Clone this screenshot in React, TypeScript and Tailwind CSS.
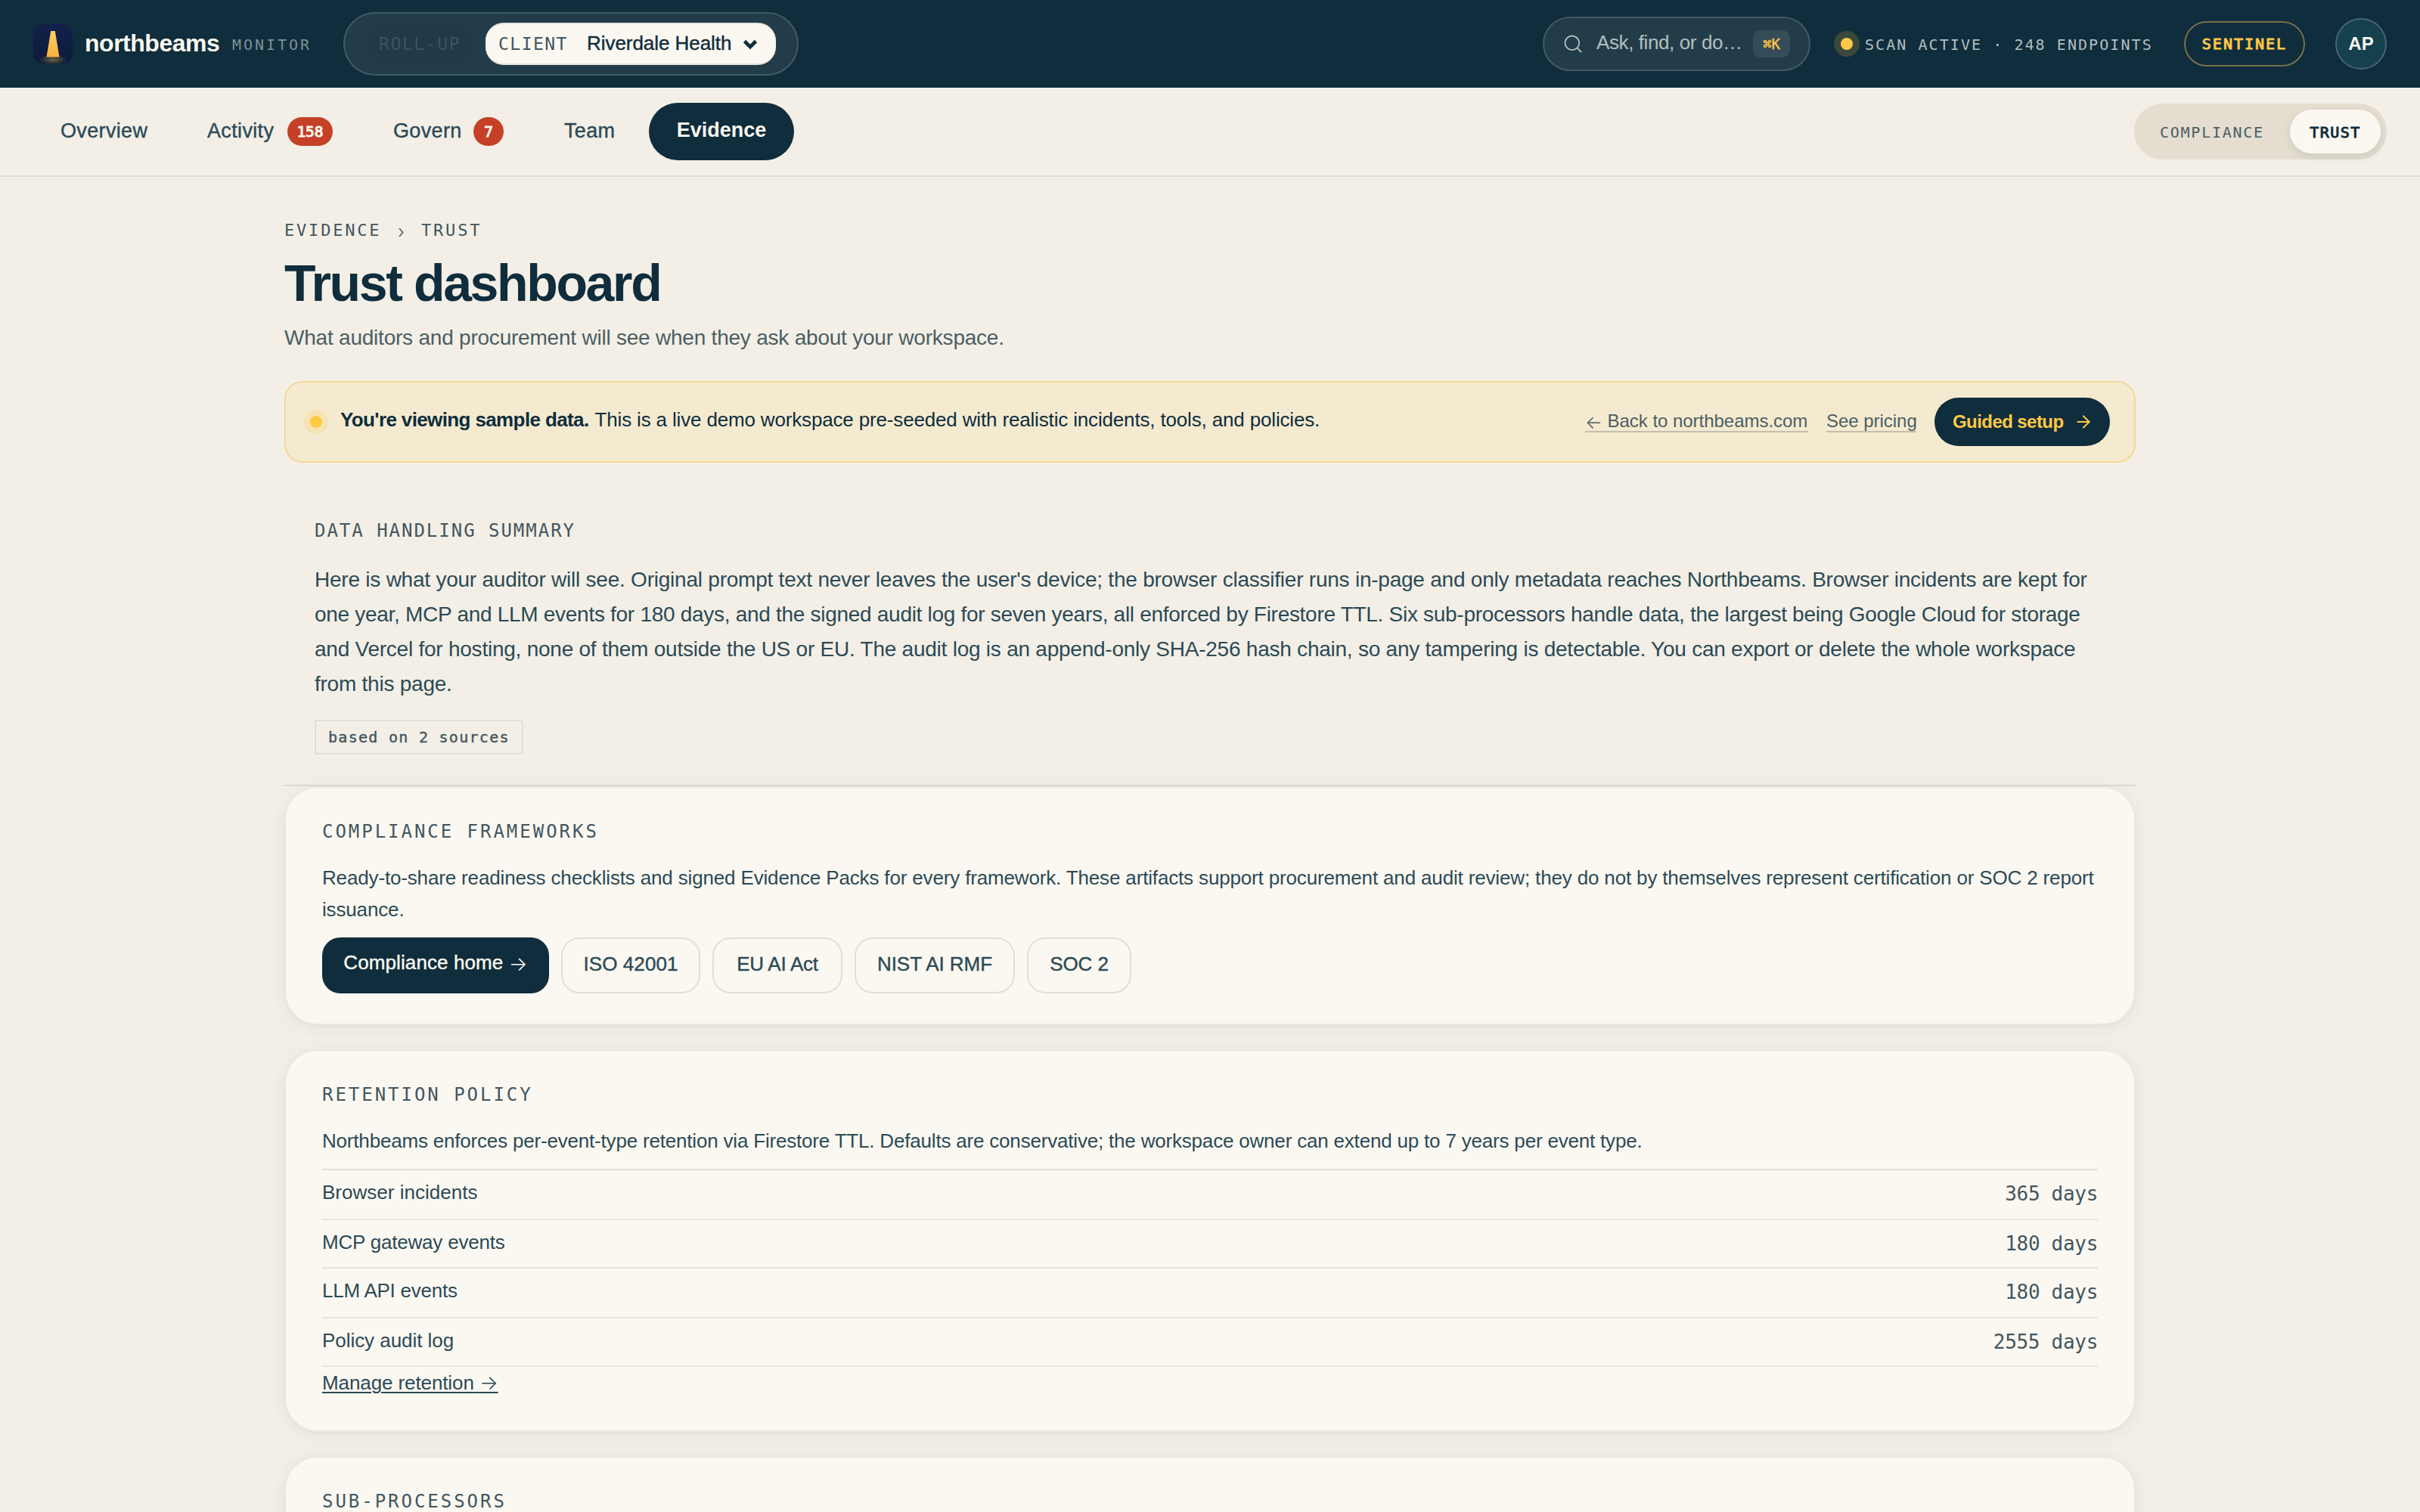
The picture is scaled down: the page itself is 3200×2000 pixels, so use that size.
import { ArrowRight, Search } from "lucide-react";

const navItems = [
  { label: "Overview", width: "w-[186px]" },
  { label: "Activity", width: "w-[238px]", badge: "158", badgeWidth: "w-[60px]" },
  { label: "Govern", width: "w-[218px]", badge: "7", badgeWidth: "w-10" },
  { label: "Team", width: "w-[140px]" },
];

const frameworks = [
  { name: "ISO 42001", width: "w-[184px]", tracking: "tracking-[0.1px]" },
  { name: "EU AI Act", width: "w-[172px]", tracking: "tracking-[-0.25px]" },
  { name: "NIST AI RMF", width: "w-[212px]", tracking: "tracking-[-0.05px]" },
  { name: "SOC 2", width: "w-[138px]", tracking: "tracking-[-0.1px]" },
];

const retention = [
  { name: "Browser incidents", days: "365 days", height: "h-[66px]", tracking: "tracking-[0.02px]" },
  { name: "MCP gateway events", days: "180 days", height: "h-[64px]", tracking: "tracking-[-0.2px]" },
  { name: "LLM API events", days: "180 days", height: "h-[66px]", tracking: "tracking-[-0.24px]" },
  { name: "Policy audit log", days: "2555 days", height: "h-[64px]", tracking: "tracking-[-0.05px]" },
];

const mono = "font-['DejaVu_Sans_Mono',monospace]";
const medium = "[-webkit-text-stroke:0.4px_currentColor]";
const semibold = "[-webkit-text-stroke:1px_currentColor]";
const arrow = "relative top-[2px] font-['Inter',sans-serif] font-light [-webkit-text-stroke:0]";

function Logo() {
  return (
    <svg viewBox="0 0 52 52" className="size-13 shrink-0">
      <defs>
        <linearGradient id="sky" x1="0" y1="0" x2="0" y2="1">
          <stop offset="0" stopColor="#13214a" />
          <stop offset="1" stopColor="#0d1a3a" />
        </linearGradient>
        <linearGradient id="beam" x1="0" y1="0" x2="0" y2="1">
          <stop offset="0" stopColor="#ffce63" />
          <stop offset="1" stopColor="#f6b13c" />
        </linearGradient>
        <radialGradient id="glow">
          <stop offset="0" stopColor="#ffc845" stopOpacity="0.4" />
          <stop offset="1" stopColor="#ffc845" stopOpacity="0" />
        </radialGradient>
        <clipPath id="tile">
          <rect width="52" height="52" rx="13" />
        </clipPath>
      </defs>
      <g clipPath="url(#tile)">
        <rect width="52" height="52" fill="url(#sky)" />
        <ellipse cx="26" cy="47" rx="19" ry="7" fill="url(#glow)" />
        <path d="M23.2 9h5.6l5.7 34.5h-17z" fill="url(#beam)" />
      </g>
    </svg>
  );
}

function Header() {
  return (
    <header className="flex h-[116px] items-center bg-[#0f2d3c] px-11">
      <Logo />
      <span className="ml-4 w-[178px] pb-0.5 text-[32px] leading-10 font-bold tracking-[-0.48px] whitespace-nowrap text-[#fbf8f1]">
        northbeams
      </span>
      <span className={`${mono} ml-[17px] w-[105px] pt-0.5 text-[20px] leading-6 tracking-[2.96px] text-[#7f9097]`}>
        MONITOR
      </span>

      {/* Client switcher */}
      <div className="ml-[42px] flex h-[84px] w-[602px] items-center rounded-full border-2 border-[#435964] bg-[#223d49] pl-[30px]">
        <div className={`${mono} flex h-14 w-[138px] items-center rounded-3xl bg-[#203b47] pl-[15px] text-[23px] tracking-[1.59px] text-[#3b535e]`}>
          ROLL-UP
        </div>
        <div className="ml-[18px] flex h-14 w-[384px] items-center rounded-3xl border-y-2 border-[#e3e3df] bg-[#fbf8f1] pl-[17px]">
          <span className={`${mono} w-[117px] text-[23px] tracking-[1.47px] text-[#42565f]`}>CLIENT</span>
          <span className={`${medium} w-[202px] pb-0.5 text-[26px] leading-8 tracking-[-0.05px] text-[#0f2d3c]`}>
            Riverdale Health
          </span>
          <svg viewBox="0 0 28 28" className="size-7 text-[#0f2d3c]" fill="none" stroke="currentColor" strokeWidth="4.6">
            <path d="M6.5 10.5 14 18l7.5-7.5" />
          </svg>
        </div>
      </div>

      <div className="ml-auto flex items-center gap-10">
        <div className="flex h-[72px] w-[354px] items-center rounded-full border-2 border-[#435964] bg-[#223d49] pl-6">
          <Search className="size-7 text-[#b4bec0]" strokeWidth={1.6} />
          <span className="ml-[17px] w-[207px] pb-1 text-[26px] leading-8 tracking-[-0.4px] text-[#b4bec0]">
            Ask, find, or do…
          </span>
          <kbd className={`${mono} flex h-9 w-[49px] items-center justify-center rounded-[10px] bg-[#344d59] text-[19px] text-[#ffc845] ${medium}`}>
            ⌘K
          </kbd>
        </div>
        <div className="flex items-center gap-4">
          <span className="size-4 rounded-full bg-[#ffc845] shadow-[0_0_0_9px_rgba(255,200,69,0.18)]" />
          <span className={`${mono} w-[382px] pt-0.5 text-[20px] leading-6 tracking-[2.06px] whitespace-nowrap text-[#b4bec0]`}>
            SCAN ACTIVE · 248 ENDPOINTS
          </span>
        </div>
        <div className={`${mono} ${semibold} flex h-[60px] w-40 items-center justify-center rounded-full border-2 border-[#76704a] text-[20px] tracking-[2px] text-[#ffc845]`}>
          SENTINEL
        </div>
        <div className="flex size-17 items-center justify-center rounded-full border-2 border-[#486570] bg-[#15414f] text-[24px] font-bold text-[#fbf8f1]">
          AP
        </div>
      </div>
    </header>
  );
}

function Nav() {
  return (
    <nav className="flex h-[118px] items-center gap-2 border-b-2 border-[#e1ddd6] px-11 text-[27px] text-[#2c4a56]">
      {navItems.map((item) => (
        <div key={item.label} className={`flex h-[76px] items-center justify-between pr-9 pl-9 ${item.width}`}>
          <span className={`${medium} pb-[3px] leading-8 tracking-[0.35px]`}>{item.label}</span>
          {item.badge && (
            <span
              className={`${mono} ${semibold} flex h-[38px] items-center justify-center rounded-full bg-[#c44127] pt-px text-[19.5px] text-[#fbf8f1] ${item.badgeWidth}`}
            >
              {item.badge}
            </span>
          )}
        </div>
      ))}
      <div className="flex h-[76px] w-[192px] items-center justify-center rounded-full bg-[#0f2d3c] pb-[3px] font-bold text-[#fbf8f1]">
        Evidence
      </div>

      <div className={`${mono} ml-auto flex h-[74px] w-[334px] items-center justify-between rounded-full bg-[#e4ddd0] pr-2 pl-[34px] text-[20px]`}>
        <span className="pt-px tracking-[1.75px] text-[#4b5e63]">COMPLIANCE</span>
        <span className={`${semibold} flex h-[58px] w-[120px] items-center justify-center rounded-full bg-[#fbf8f1] pt-px tracking-[1.46px] text-[#0f2d3c] shadow-[0_4px_12px_rgba(15,45,60,0.1)]`}>
          TRUST
        </span>
      </div>
    </nav>
  );
}

function Banner() {
  return (
    <div className="mt-9 flex h-[108px] items-center rounded-3xl border-2 border-[#f5d893] bg-[#f4ead0] pr-8 pl-8">
      <span className="size-4 rounded-full bg-[#ffc845] shadow-[0_0_0_8px_rgba(255,200,69,0.2)]" />
      <p className="ml-6 pb-1.5 text-[26px] leading-10 tracking-[-0.16px] text-[#0f2d3c]">
        <strong className="tracking-[-0.62px]">You're viewing sample data.</strong>
        <span className="ml-[8px]">
          This is a live demo workspace pre-seeded with realistic incidents, tools, and policies.
        </span>
      </p>
      <div className="ml-auto flex items-center gap-6 text-[24px] leading-[26px] text-[#4b5e63]">
        <a className="w-[295px] border-b-2 border-[#c4bfae] tracking-[-0.03px] whitespace-nowrap">
          <span className={arrow}>←</span> Back to northbeams.com
        </a>
        <a className="w-[119px] border-b-2 border-[#c4bfae] tracking-[-0.03px] whitespace-nowrap">See pricing</a>
        <a className="flex h-16 w-[232px] items-center justify-between rounded-full bg-[#0f2d3c] pr-[22px] pl-6 font-bold tracking-[-0.57px] text-[#ffc845]">
          Guided setup
          <ArrowRight className="size-[26px]" strokeWidth={1.9} />
        </a>
      </div>
    </div>
  );
}

function Summary() {
  return (
    <section className="mt-[71px] border-b-2 border-[#dedad2] px-10 pb-10">
      <h2 className={`${mono} text-[24px] leading-9 tracking-[1.98px] text-[#42565f]`}>DATA HANDLING SUMMARY</h2>
      <p className="mt-6 text-[28px] leading-[46px] whitespace-nowrap text-[#2c4a56]">
        <span className="block tracking-[-0.23px]">
          Here is what your auditor will see. Original prompt text never leaves the user's device; the browser classifier
          runs in-page and only metadata reaches Northbeams. Browser incidents are kept for
        </span>
        <span className="block tracking-[-0.29px]">
          one year, MCP and LLM events for 180 days, and the signed audit log for seven years, all enforced by Firestore
          TTL. Six sub-processors handle data, the largest being Google Cloud for storage
        </span>
        <span className="block tracking-[-0.24px]">
          and Vercel for hosting, none of them outside the US or EU. The audit log is an append-only SHA-256 hash chain,
          so any tampering is detectable. You can export or delete the whole workspace
        </span>
        <span className="block tracking-[-0.24px]">from this page.</span>
      </p>
      <div className={`${mono} ${medium} mt-6 flex h-[46px] w-[276px] items-center rounded-[4px] border-2 border-[#e2ddd5] pl-4 text-[20px] tracking-[1.28px] text-[#42565f]`}>
        based on 2 sources
      </div>
    </section>
  );
}

function Card({ title, className, children }: { title: string; className?: string; children?: React.ReactNode }) {
  return (
    <section
      className={`rounded-[44px] border-2 border-[#ebe8df] bg-[#fbf8f1] px-12 pt-[38px] text-[26px] leading-[42px] text-[#2c4a56] shadow-[0_2px_4px_rgba(15,45,60,0.03),0_4px_24px_rgba(15,45,60,0.06)] ${className ?? ""}`}
    >
      <h2 className={`${mono} mb-5 text-[24px] leading-10 tracking-[2.97px] text-[#42565f]`}>{title}</h2>
      {children}
    </section>
  );
}

export default function App() {
  return (
    <div className="h-[2000px] w-[3200px] overflow-hidden bg-[#f3efe6] font-['Liberation_Sans',Arial,sans-serif]">
      <Header />
      <Nav />

      <main className="mx-auto w-[2448px]">
        <div className={`${mono} mt-[54px] flex h-8 items-center text-[22px] tracking-[2.8px] text-[#42565f]`}>
          <span className="w-[150px]">EVIDENCE</span>
          <span className="w-[31px] pt-1.5 font-['Inter'] text-[24px] leading-6 font-light">›</span>
          <span>TRUST</span>
        </div>
        <h1 className="mt-[18px] text-[68px] leading-[72px] font-bold tracking-[-2.36px] text-[#0f2d3c]">
          Trust dashboard
        </h1>
        <p className="mt-[15px] text-[28px] leading-[44px] tracking-[-0.22px] text-[#4b5e63]">
          What auditors and procurement will see when they ask about your workspace.
        </p>

        <div className="-mt-px">
          <Banner />
        </div>
        <div className="mb-0 pt-px">
          <Summary />
        </div>

        <Card title="COMPLIANCE FRAMEWORKS" className="pb-10">
          <p className="tracking-[-0.155px] whitespace-nowrap">
            Ready-to-share readiness checklists and signed Evidence Packs for every framework. These artifacts support
            procurement and audit review; they do not by themselves represent certification or SOC 2 report
            <br />
            issuance.
          </p>
          <div className={`${medium} mt-4 flex gap-4`}>
            <a className="flex h-[74px] w-[300px] items-center justify-center rounded-3xl bg-[#0f2d3c] pb-2 tracking-[0.1px] whitespace-pre text-[#fbf8f1]">
              Compliance home <span className={arrow}>→</span>
            </a>
            {frameworks.map((f) => (
              <a
                key={f.name}
                className={`flex h-[74px] items-center justify-center rounded-3xl border-2 border-[#e2dfd8] pb-1 whitespace-nowrap ${f.width} ${f.tracking}`}
              >
                {f.name}
              </a>
            ))}
          </div>
        </Card>

        <Card title="RETENTION POLICY" className="mt-8 pb-[42px]">
          <p className="tracking-[-0.19px] whitespace-nowrap">
            Northbeams enforces per-event-type retention via Firestore TTL. Defaults are conservative; the workspace
            owner can extend up to 7 years per event type.
          </p>
          <ul className="mt-4 border-t-2 border-[#e0ddd6]">
            {retention.map((row) => (
              <li key={row.name} className={`flex justify-between border-b-2 border-[#e8e5de] ${row.height}`}>
                <span className={`mt-2 ${row.tracking}`}>{row.name}</span>
                <span className={`${mono} mt-2.5 tracking-[-0.3px] text-[#42565f]`}>{row.days}</span>
              </li>
            ))}
          </ul>
          <a className="block h-[42px] w-[233px] tracking-[-0.1px] whitespace-nowrap underline decoration-2 underline-offset-[3px]">
            Manage retention <span className="font-['Inter',sans-serif] font-light">→</span>
          </a>
        </Card>

        <Card title="SUB-PROCESSORS" className="mt-8 pb-10" />
      </main>
    </div>
  );
}
